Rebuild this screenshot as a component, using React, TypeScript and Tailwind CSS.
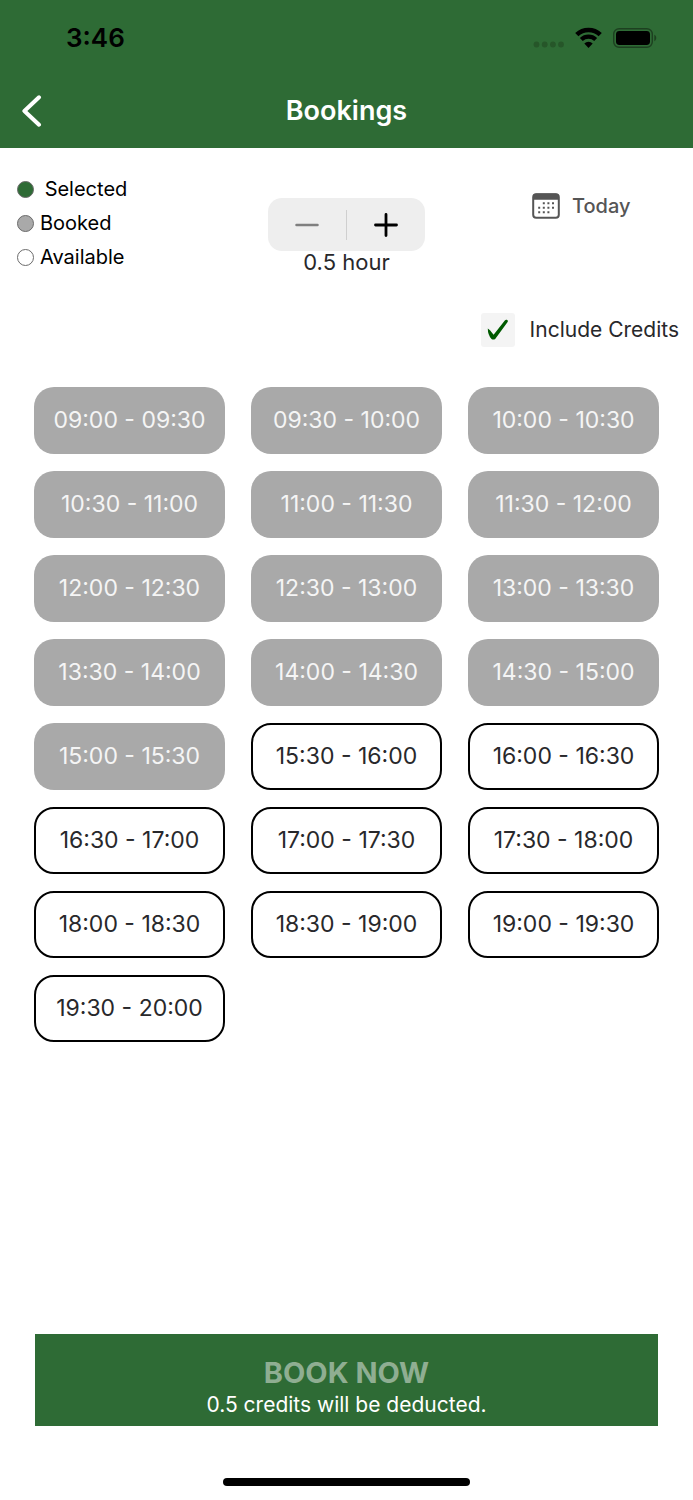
import { useState } from "react";

type Slot = {
  time: string;
  booked: boolean;
};

const slots: Slot[] = [
  { time: "09:00 - 09:30", booked: true },
  { time: "09:30 - 10:00", booked: true },
  { time: "10:00 - 10:30", booked: true },
  { time: "10:30 - 11:00", booked: true },
  { time: "11:00 - 11:30", booked: true },
  { time: "11:30 - 12:00", booked: true },
  { time: "12:00 - 12:30", booked: true },
  { time: "12:30 - 13:00", booked: true },
  { time: "13:00 - 13:30", booked: true },
  { time: "13:30 - 14:00", booked: true },
  { time: "14:00 - 14:30", booked: true },
  { time: "14:30 - 15:00", booked: true },
  { time: "15:00 - 15:30", booked: true },
  { time: "15:30 - 16:00", booked: false },
  { time: "16:00 - 16:30", booked: false },
  { time: "16:30 - 17:00", booked: false },
  { time: "17:00 - 17:30", booked: false },
  { time: "17:30 - 18:00", booked: false },
  { time: "18:00 - 18:30", booked: false },
  { time: "18:30 - 19:00", booked: false },
  { time: "19:00 - 19:30", booked: false },
  { time: "19:30 - 20:00", booked: false },
];

function StatusBar() {
  return (
    <div className="flex h-[75px] items-center justify-between pl-[66px] pr-9">
      <span className="text-[26px] font-semibold text-black">3:46</span>
      <div className="flex items-center gap-[11px]">
        <svg width="31" height="22" viewBox="0 0 31 22" fill="#265629">
          <circle cx="3.500" cy="17.500" r="2.900" />
          <circle cx="11.700" cy="17.500" r="2.900" />
          <circle cx="19.900" cy="17.500" r="2.900" />
          <circle cx="28" cy="17.500" r="2.900" />
        </svg>
        <svg width="27" height="22" viewBox="0 0 27 22" fill="none" stroke="#000">
          <path d="M1.800 7.700a16.800 16.800 0 0 1 23.400 0" strokeWidth="4.600" />
          <path d="M6.300 12.500a10.400 10.400 0 0 1 14.400 0" strokeWidth="4.200" />
          <path d="M13.500 21 9.300 16.400a6.200 6.200 0 0 1 8.400 0z" fill="#000" stroke="none" />
        </svg>
        <svg width="44" height="22" viewBox="0 0 44 22" fill="none">
          <rect x="0.7" y="1.7" width="38.6" height="18.6" rx="5.5" stroke="#1d4020" strokeWidth="1.4" />
          <rect x="3" y="4" width="34" height="14" rx="3.4" fill="#000" />
          <path d="M41.3 7.8c2.6 1 2.6 5.4 0 6.4z" fill="#1d4020" />
        </svg>
      </div>
    </div>
  );
}

function Header() {
  return (
    <header className="bg-[#2e6b35]">
      <StatusBar />
      <div className="grid h-[73px] grid-cols-3 items-center">
        <button type="button" aria-label="Back" className="ml-[22px] w-5">
          <svg width="20" height="34" viewBox="0 0 20 34" fill="none" stroke="#fff" strokeWidth="4" strokeLinecap="round" strokeLinejoin="round">
            <path d="M17 2.300 2.400 16l14.600 13.700" />
          </svg>
        </button>
        <h1 className="text-center text-[27px] font-semibold text-white">Bookings</h1>
      </div>
    </header>
  );
}

function Legend() {
  return (
    <ul className="pl-[17px] text-[20px] text-black">
      <li className="flex h-[34px] items-center gap-[5px] whitespace-pre">
        <span className="size-[17px] rounded-full border border-[#6b6b6b] bg-[#2e6b35]" />
        <span>{" Selected"}</span>
      </li>
      <li className="flex h-[34px] items-center gap-[6px]">
        <span className="size-[17px] rounded-full border border-[#6b6b6b] bg-[#a9a9a9]" />
        <span>Booked</span>
      </li>
      <li className="flex h-[34px] items-center gap-[6px]">
        <span className="size-[17px] rounded-full border border-[#6b6b6b] bg-white" />
        <span>Available</span>
      </li>
    </ul>
  );
}

function CalendarIcon() {
  return (
    <svg width="28" height="26" viewBox="0 0 28 26" fill="#555">
      <rect x="1.2" y="1.2" width="25.6" height="23.6" rx="3" fill="none" stroke="#555" strokeWidth="2" />
      <path d="M1 6.8V4a3.500 3.500 0 0 1 3.500-3.500h19A3.500 3.500 0 0 1 27 4v2.800z" />
      <path d="M10.800 9.300h2v2h-2zM15.400 9.300h2v2h-2zM20 9.300h2v2h-2zM6.200 13.800h2v2h-2zM10.800 13.800h2v2h-2zM15.400 13.800h2v2h-2zM20 13.800h2v2h-2zM6.200 18.300h2v2h-2zM10.800 18.300h2v2h-2zM15.400 18.300h2v2h-2z" />
    </svg>
  );
}

export default function App() {
  const [hours, setHours] = useState(0.5);
  const [credits, setCredits] = useState(true);
  const [selected, setSelected] = useState("");

  return (
    <div className="flex min-h-screen flex-col bg-white font-['Inter',sans-serif] text-[#28282b]">
      <Header />

      <div className="grid grid-cols-3 items-start pt-6">
        <Legend />
        <div className="flex flex-col items-center pt-[26px]">
          <div className="flex h-[53px] w-[157px] items-center rounded-[14px] bg-[#eeeeee]">
            <button
              type="button"
              aria-label="Decrease duration"
              disabled={hours <= 0.5}
              onClick={() => setHours(hours - 0.5)}
              className="flex h-full flex-1 items-center justify-center text-black disabled:text-[#7f7f7f]"
            >
              <svg width="24" height="24" viewBox="0 0 24 24" stroke="currentColor" strokeWidth="2.500" strokeLinecap="round">
                <path d="M1.500 12h21" />
              </svg>
            </button>
            <span className="h-[30px] w-px bg-[#cfcfcf]" />
            <button
              type="button"
              aria-label="Increase duration"
              onClick={() => setHours(hours + 0.5)}
              className="flex h-full flex-1 items-center justify-center text-black"
            >
              <svg width="24" height="24" viewBox="0 0 24 24" stroke="currentColor" strokeWidth="2.800" strokeLinecap="round">
                <path d="M1.500 12h21M12 1.500v21" />
              </svg>
            </button>
          </div>
          <p className="text-[22px] leading-[22px]">{hours} hour</p>
        </div>
        <button type="button" className="flex items-center gap-3 pl-[70px] pt-[19px] text-[20px] font-medium text-[#555]">
          <CalendarIcon />
          Today
        </button>
      </div>

      <label className="mt-[39px] flex items-center justify-end gap-[15px] pr-[14px] text-[21px]">
        <span className="grid size-[34px] place-items-center">
          <input
            type="checkbox"
            checked={credits}
            onChange={(e) => setCredits(e.target.checked)}
            className="col-start-1 row-start-1 size-[34px] appearance-none rounded-[3px] bg-[#f4f4f4]"
          />
          {credits && (
            <svg width="22" height="22" viewBox="0 0 22 22" fill="#005a00" className="pointer-events-none col-start-1 row-start-1">
              <path d="M.8 9.500Q.8 16 4.500 20q1.800 1.200 3.700 0L20.800 2.800q.5-1.600-1-2.100-1.200-.3-2 .7L6.600 15.800 3 11.200z" />
            </svg>
          )}
        </span>
        Include Credits
      </label>

      <div className="mt-10 grid grid-cols-3 gap-x-[26px] gap-y-[17px] px-[34px]">
        {slots.map((slot) => (
          <button
            key={slot.time}
            type="button"
            disabled={slot.booked}
            onClick={() => setSelected(slot.time)}
            className={
              slot.booked
                ? "h-[67px] rounded-[20px] bg-[#a9a9a9] text-[23px] text-[#f5f5f5]"
                : selected === slot.time
                  ? "h-[67px] rounded-[20px] bg-[#2e6b35] text-[23px] text-white"
                  : "h-[67px] rounded-[20px] border-2 border-black text-[23px]"
            }
          >
            {slot.time}
          </button>
        ))}
      </div>

      <footer className="mt-auto flex flex-col items-center px-[35px] pb-[14px] pt-10">
        <button
          type="button"
          disabled={!selected}
          className="flex h-[92px] w-full flex-col items-center bg-[#2e6b35] pt-5 text-white disabled:text-[#8fae92]"
        >
          <span className="text-[29px] font-bold leading-[38px]">BOOK NOW</span>
          <span className="text-[21px] leading-[26px] text-white">{hours} credits will be deducted.</span>
        </button>
        <div className="mt-[52px] h-2 w-[247px] rounded-full bg-black" />
      </footer>
    </div>
  );
}
